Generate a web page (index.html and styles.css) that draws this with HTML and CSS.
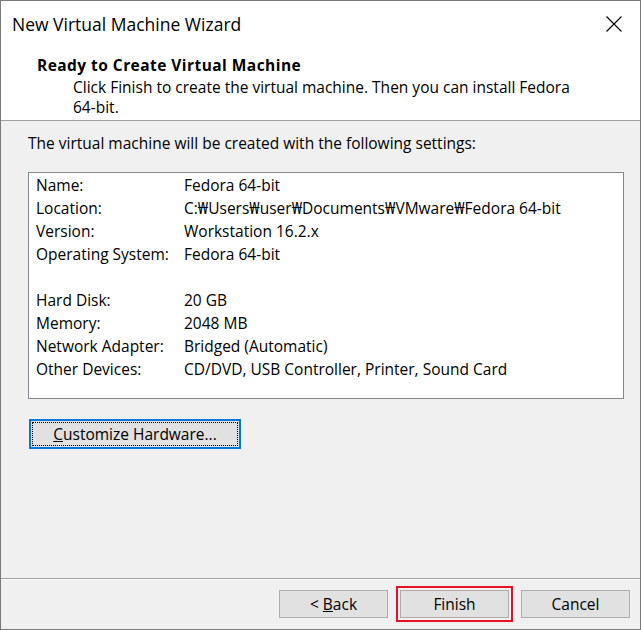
FILE: index.html
```html
<!DOCTYPE html>
<html lang="en">

<head>
    <meta charset="UTF-8">
    <title>New Virtual Machine Wizard</title>
    <link rel="stylesheet" href="styles.css">
</head>

<body>
    <div class="window">
        <div class="titlebar">
            <span class="title">New Virtual Machine Wizard</span>
            <svg class="close" width="16" height="16" viewBox="0 0 16 16">
                <path d="M0.5 0.5 L15.5 15.5 M15.5 0.5 L0.5 15.5" stroke="#000" stroke-width="1.1" fill="none" />
            </svg>
        </div>

        <div class="header">
            <div class="header-title">Ready to Create Virtual Machine</div>
            <div class="header-desc">Click Finish to create the virtual machine. Then you can install Fedora <span class="nowrap">64-bit.</span></div>
        </div>

        <div class="content">
            <p class="intro">The virtual machine will be created with the following settings:</p>
            <div class="summary">
                <div class="row"><span class="label">Name:</span><span>Fedora 64-bit</span></div>
                <div class="row"><span class="label">Location:</span><span>C:₩Users₩user₩Documents₩VMware₩Fedora 64-bit</span></div>
                <div class="row"><span class="label">Version:</span><span>Workstation 16.2.x</span></div>
                <div class="row"><span class="label">Operating System:</span><span>Fedora 64-bit</span></div>
                <div class="row"></div>
                <div class="row"><span class="label">Hard Disk:</span><span>20 GB</span></div>
                <div class="row"><span class="label">Memory:</span><span>2048 MB</span></div>
                <div class="row"><span class="label">Network Adapter:</span><span>Bridged (Automatic)</span></div>
                <div class="row"><span class="label">Other Devices:</span><span>CD/DVD, USB Controller, Printer, Sound Card</span></div>
            </div>
            <button class="btn btn-focus"><u>C</u>ustomize Hardware...</button>
        </div>

        <div class="footer">
            <button class="btn">&lt; <u>B</u>ack</button>
            <button class="btn btn-marked">Finish</button>
            <button class="btn">Cancel</button>
        </div>
    </div>
</body>

</html>
```

FILE: styles.css
```css
body,
html {
    margin: 0;
    height: 100%;
    font-family: "Open Sans", "Noto Sans", sans-serif;
    font-size: 15.5px;
    color: #000;
    background-color: #fff;
}

.window {
    box-sizing: border-box;
    width: 641px;
    height: 630px;
    border: 1px solid #7a7a7a;
    display: flex;
    flex-direction: column;
    background-color: #f0f0f0;
}

.titlebar {
    height: 46px;
    display: flex;
    align-items: center;
    justify-content: space-between;
    padding: 0 18px 0 11px;
    background-color: #fff;
}

.title {
    font-size: 17.5px;
}

.close {
    display: block;
    margin-top: -1px;
}

.header {
    background-color: #fff;
    padding: 8px 60px 3px 36px;
    border-bottom: 1px solid #a0a0a0;
}

.header-title {
    font-weight: bold;
    letter-spacing: 0.45px;
    line-height: 20px;
}

.header-desc {
    margin: 2px 0 0 36px;
    line-height: 20px;
}

.nowrap {
    white-space: nowrap;
}

.content {
    flex: 1;
    padding: 12px 16px 0 27px;
}

.intro {
    margin: 0;
    line-height: 20px;
}

.summary {
    margin-top: 19px;
    height: 224px;
    box-sizing: content-box;
    border: 1px solid #828790;
    background-color: #fff;
    padding: 1px 0 0 7px;
}

.row {
    display: flex;
    height: 23px;
    line-height: 23px;
}

.label {
    width: 148px;
    flex-shrink: 0;
}

.btn {
    position: relative;
    box-sizing: border-box;
    width: 109px;
    height: 28px;
    padding: 0;
    font-family: inherit;
    font-size: 15.5px;
    line-height: 20px;
    color: #000;
    background-color: #e1e1e1;
    border: 1px solid #adadad;
}

.btn-focus {
    display: block;
    margin: 20px 0 0 1px;
    width: 212px;
    height: 30px;
    border: 2px solid #0078d7;
}

.btn-focus::after {
    content: '';
    position: absolute;
    inset: 1px;
    border: 1px dotted #000;
}

.footer {
    display: flex;
    justify-content: flex-end;
    gap: 12px;
    padding: 11px 10px 0 0;
    height: 51px;
    box-sizing: border-box;
    border-top: 1px solid #a0a0a0;
    box-shadow: inset 0 1px 0 #fff;
}

.btn-marked {
    outline: 2px solid #e81123;
    outline-offset: 2px;
}
```
